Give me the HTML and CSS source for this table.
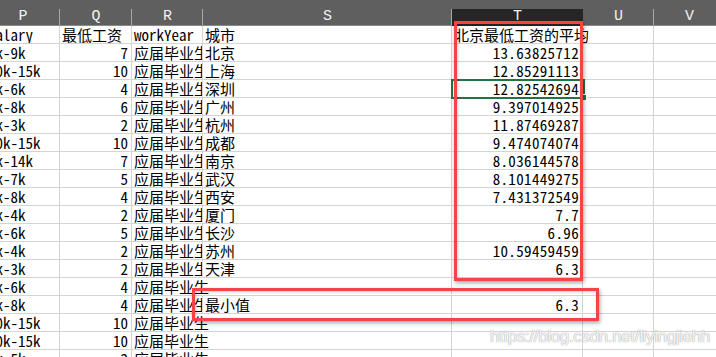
FILE: index.html
```html
<!DOCTYPE html>
<html>
<head>
<meta charset="utf-8">
<link rel="stylesheet" href="styles.css">
</head>
<body>
<div class="sheet">
  <div class="grid">
    <div class="hd">P</div><div class="hd">Q</div><div class="hd">R</div><div class="hd">S</div><div class="hd act">T</div><div class="hd">U</div><div class="hd">V</div>

    <div class="c l">salary</div><div class="c l">最低工资</div><div class="c l">workYear</div><div class="c l">城市</div><div class="c noline ovt"><span class="ovtext">北京最低工资的平均</span></div><div class="c"></div><div class="c"></div>

    <div class="c l">6k-9k</div><div class="c r">7</div><div class="c l">应届毕业生</div><div class="c l">北京</div><div class="c r n">13.63825712</div><div class="c"></div><div class="c"></div>
    <div class="c l">10k-15k</div><div class="c r">10</div><div class="c l">应届毕业生</div><div class="c l">上海</div><div class="c r n">12.85291113</div><div class="c"></div><div class="c"></div>
    <div class="c l">4k-6k</div><div class="c r">4</div><div class="c l">应届毕业生</div><div class="c l">深圳</div><div class="c r n">12.82542694</div><div class="c"></div><div class="c"></div>
    <div class="c l">6k-8k</div><div class="c r">6</div><div class="c l">应届毕业生</div><div class="c l">广州</div><div class="c r n">9.397014925</div><div class="c"></div><div class="c"></div>
    <div class="c l">2k-3k</div><div class="c r">2</div><div class="c l">应届毕业生</div><div class="c l">杭州</div><div class="c r n">11.87469287</div><div class="c"></div><div class="c"></div>
    <div class="c l">10k-15k</div><div class="c r">10</div><div class="c l">应届毕业生</div><div class="c l">成都</div><div class="c r n">9.474074074</div><div class="c"></div><div class="c"></div>
    <div class="c l">7k-14k</div><div class="c r">7</div><div class="c l">应届毕业生</div><div class="c l">南京</div><div class="c r n">8.036144578</div><div class="c"></div><div class="c"></div>
    <div class="c l">5k-7k</div><div class="c r">5</div><div class="c l">应届毕业生</div><div class="c l">武汉</div><div class="c r n">8.101449275</div><div class="c"></div><div class="c"></div>
    <div class="c l">4k-8k</div><div class="c r">4</div><div class="c l">应届毕业生</div><div class="c l">西安</div><div class="c r n">7.431372549</div><div class="c"></div><div class="c"></div>
    <div class="c l">2k-4k</div><div class="c r">2</div><div class="c l">应届毕业生</div><div class="c l">厦门</div><div class="c r n">7.7</div><div class="c"></div><div class="c"></div>
    <div class="c l">5k-6k</div><div class="c r">5</div><div class="c l">应届毕业生</div><div class="c l">长沙</div><div class="c r n">6.96</div><div class="c"></div><div class="c"></div>
    <div class="c l">2k-4k</div><div class="c r">2</div><div class="c l">应届毕业生</div><div class="c l">苏州</div><div class="c r n">10.59459459</div><div class="c"></div><div class="c"></div>
    <div class="c l">2k-3k</div><div class="c r">2</div><div class="c l">应届毕业生</div><div class="c l">天津</div><div class="c r n">6.3</div><div class="c"></div><div class="c"></div>
    <div class="c l">4k-6k</div><div class="c r">4</div><div class="c noline ovt"><span class="ovtext">应届毕业生</span></div><div class="c"></div><div class="c"></div><div class="c"></div><div class="c"></div>
    <div class="c l">4k-8k</div><div class="c r">4</div><div class="c l">应届毕业生</div><div class="c l">最小值</div><div class="c r n">6.3</div><div class="c"></div><div class="c"></div>
    <div class="c l">10k-15k</div><div class="c r">10</div><div class="c noline ovt"><span class="ovtext">应届毕业生</span></div><div class="c"></div><div class="c"></div><div class="c"></div><div class="c"></div>
    <div class="c l">10k-15k</div><div class="c r">10</div><div class="c noline ovt"><span class="ovtext">应届毕业生</span></div><div class="c"></div><div class="c"></div><div class="c"></div><div class="c"></div>
    <div class="c l">4k-5k</div><div class="c r">2</div><div class="c noline ovt"><span class="ovtext">应届毕业生</span></div><div class="c"></div><div class="c"></div><div class="c"></div><div class="c"></div>
  </div>

  <div class="sel"><span class="handle"></span></div>
  <div class="mark mark-col"></div>
  <div class="mark mark-min"></div>
  <div class="wm">https://blog.csdn.net/liyingjiehh</div>
</div>
</body>
</html>
```
FILE: styles.css
```css
html,body{margin:0;padding:0;background:#fff;overflow:hidden}
body{width:716px;height:357px}
.sheet{position:relative;width:716px;height:357px;overflow:hidden}
.grid{
  display:grid;
  grid-template-columns:74px 72px 71px 249px 131px 71px 71px;
  grid-auto-rows:18px;
  grid-template-rows:26px;
  margin-left:-14px;
  width:739px;
  font-family:"Noto Sans Mono CJK SC","Noto Sans CJK SC","Liberation Mono",monospace;
  font-size:15px;
  color:#000;
}
.hd{
  background:#5f5f5f;
  color:#f2f2f2;
  font-family:"Liberation Mono","DejaVu Sans Mono",monospace;
  font-size:15px;
  line-height:16px;
  text-align:center;
  padding-top:9px;
  box-sizing:border-box;
  height:26px;
  background-image:linear-gradient(#a9a9a9,#a9a9a9);
  background-size:1px 16px;
  background-position:right 9px;
  background-repeat:no-repeat;
  border-bottom:1px solid #8a8a8a;
}
.hd.act{background-color:#262626;background-image:linear-gradient(#262626,#262626);border-bottom:1px solid #262626;box-shadow:inset 0 9px 0 #5f5f5f}
.c{
  box-sizing:border-box;
  height:18px;
  border-right:1px solid #d4d4d4;
  border-bottom:1px solid #d4d4d4;
  line-height:17px;
  white-space:nowrap;
  overflow:hidden;
}
.l{padding-left:2px;text-align:left}
.r{padding-right:3px;text-align:right}
.n{letter-spacing:0.35px}
.noline{border-right-color:transparent}
.ovt{overflow:visible;position:relative;z-index:1;padding-left:2px}
.sel{
  position:absolute;
  left:451px;top:79px;
  width:134px;height:20px;
  box-sizing:border-box;
  border:2px solid #217346;
}
.handle{
  position:absolute;
  right:-4px;bottom:-4px;
  width:5px;height:5px;
  background:#217346;
  border:1px solid #fff;
}
.mark{
  position:absolute;
  box-sizing:border-box;
  border:3px solid #f64444;
  box-shadow:1px 2px 4px rgba(0,0,0,0.35),inset 1px 1px 3px rgba(0,0,0,0.2);
  z-index:3;
}
.mark-col{left:454px;top:21px;width:129px;height:260px}
.mark-min{left:192px;top:288px;width:407px;height:33px}
.wm{
  position:absolute;
  left:490px;top:327px;
  font-family:"Liberation Sans",Arial,sans-serif;
  font-size:17px;
  line-height:20px;
  letter-spacing:-0.35px;
  white-space:nowrap;
  color:rgba(255,255,255,0.9);
  text-shadow:0 0 1px #9a9a9a,0 0 1px #bdbdbd;
  z-index:4;
}
```
